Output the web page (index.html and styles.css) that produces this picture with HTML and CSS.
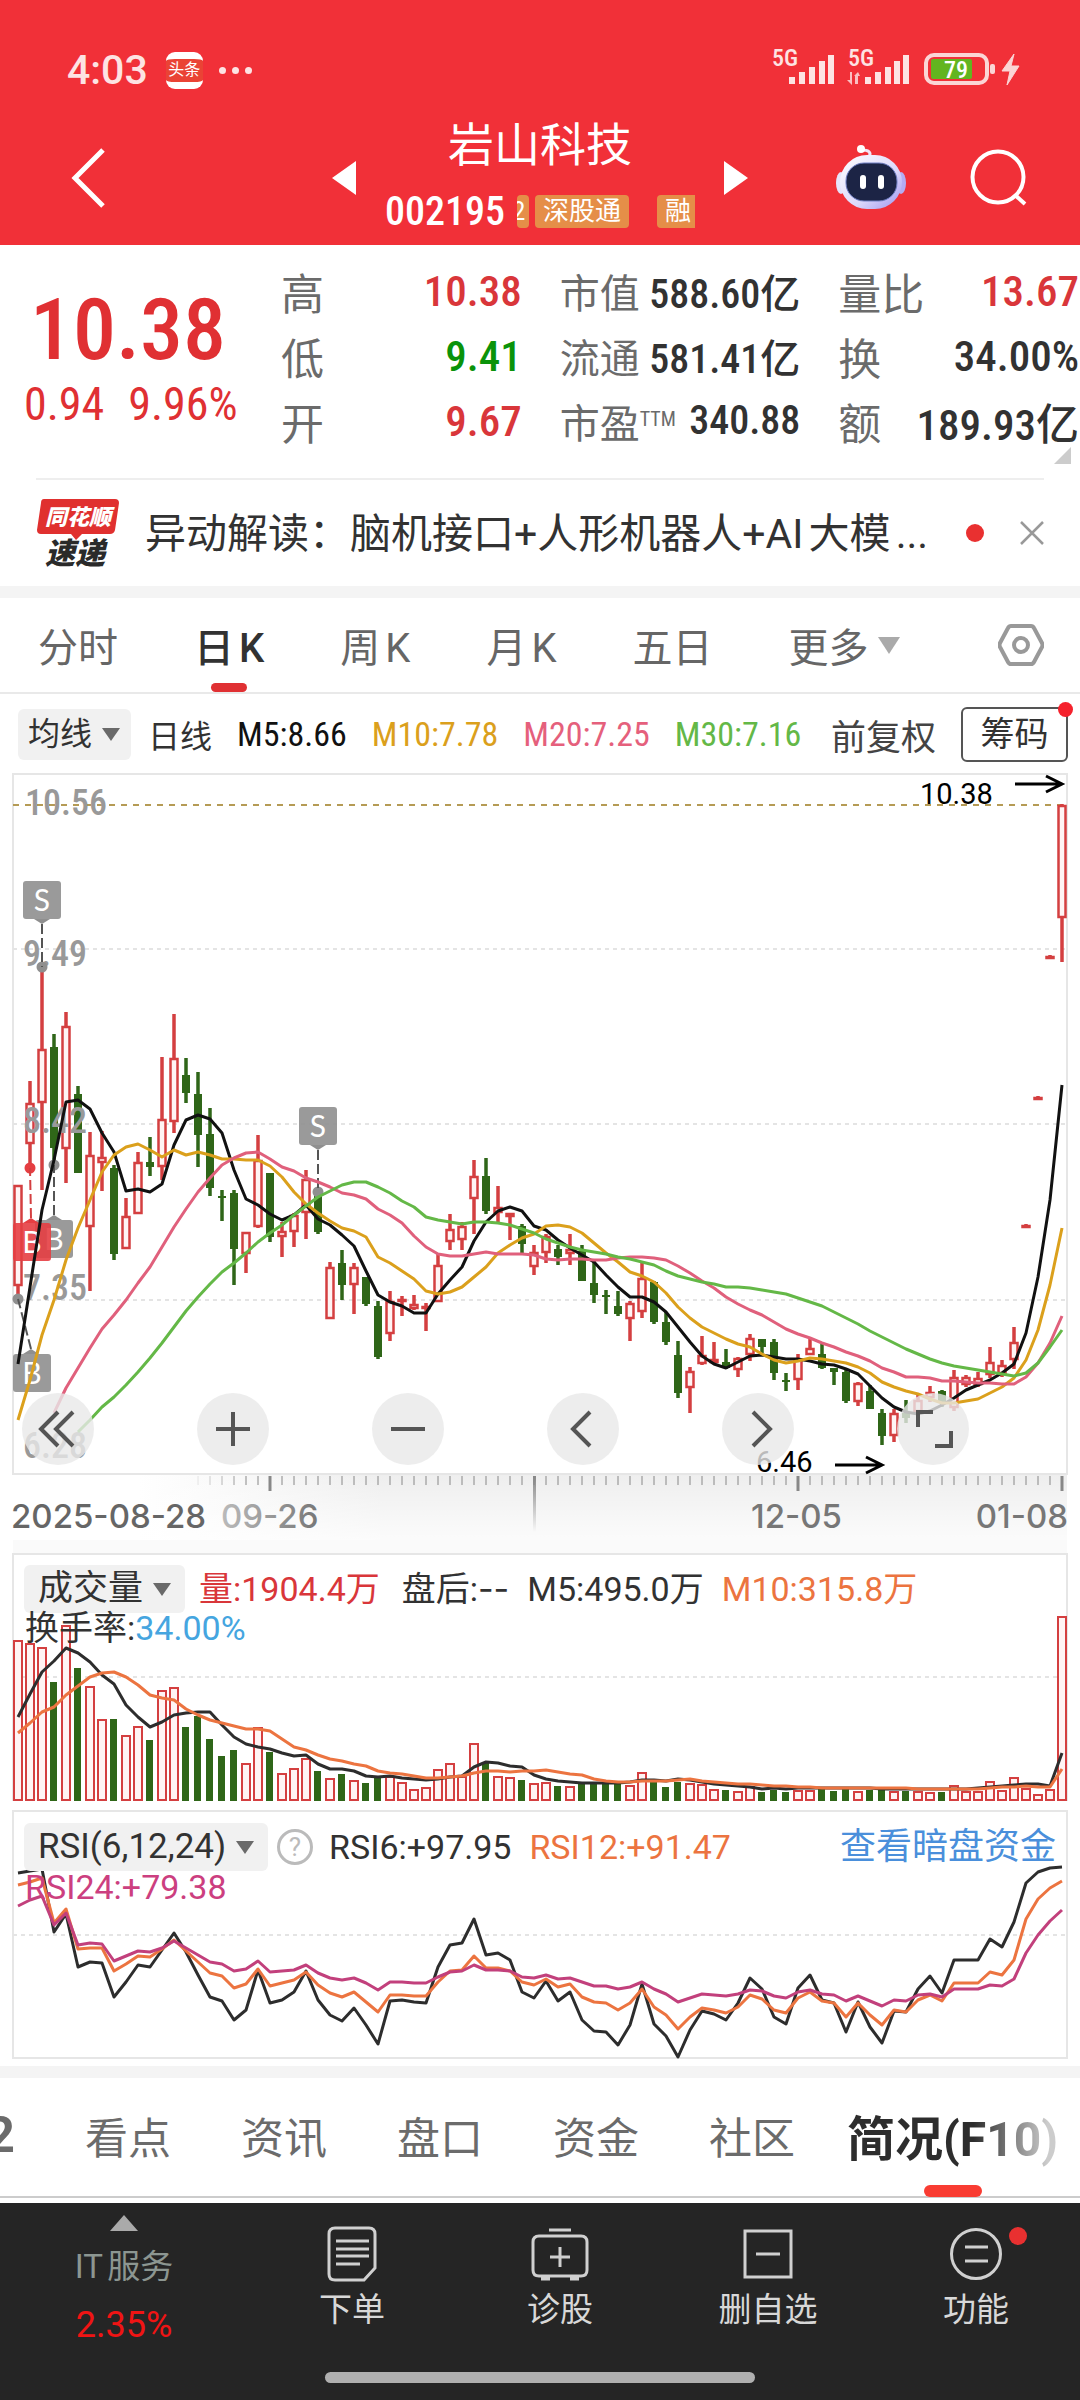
FILE: index.html
```html
<!DOCTYPE html>
<html lang="zh-CN">
<head>
    <meta charset="UTF-8">
    <meta name="viewport" content="width=device-width, initial-scale=1.0">
    <title>岩山科技 002195</title>
    <link rel="stylesheet" href="styles.css">
</head>
<body>
    <header class="top">
        <div class="status">
            <span class="clock">4:03</span>
            <span class="app-badge">头条</span>
            <span class="more-dots"><i></i><i></i><i></i></span>
            <svg class="status-icons" width="254" height="60" viewBox="768 40 254 60" aria-hidden="true">
                <g fill="#fde3e3">
                    <text x="772" y="66" class="net">5G</text>
                    <path d="M789 77h6v7h-6zM799 72h6v12h-6zM809 67h6v17h-6zM819 61h6v23h-6zM828 55h6v29h-6z"/>
                    <text x="848" y="66" class="net">5G</text>
                    <path d="M850 72v8h-3l5 5v-13zM855 84v-8h-1l4-4 2 4h-2v8z" opacity=".8"/>
                    <path d="M865 77h6v7h-6zM875 72h6v12h-6zM885 67h6v17h-6zM894 61h6v23h-6zM903 55h6v29h-6z"/>
                </g>
                <rect x="926" y="55" width="61" height="28" rx="8" fill="none" stroke="#fbd5d5" stroke-width="4"/>
                <rect x="931" y="59" width="41" height="20" rx="2" fill="#62b51f"/>
                <rect x="990" y="64" width="5" height="10" rx="2" fill="#fbd5d5"/>
                <text x="956" y="78" class="charge" text-anchor="middle">79</text>
                <path d="M1014 54l-12 17h8l-3 14 12-19h-8z" fill="#fbd5d5" stroke="#fbd5d5" stroke-width="1"/>
            </svg>
        </div>
        <div class="title-row">
            <button class="icon-btn back" aria-label="返回">
                <svg width="36" height="60" viewBox="0 0 36 60"><path d="M33 2L5 30l28 28" fill="none" stroke="#fff" stroke-width="5"/></svg>
            </button>
            <div class="stock">
                <button class="icon-btn" aria-label="上一只"><svg width="24" height="34"><path d="M24 0v34L0 17z" fill="#fff"/></svg></button>
                <div class="stock-name">
                    <h1>岩山科技</h1>
                    <div class="code-row">
                        <span class="code">002195</span>
                        <span class="tags"><b class="cut">2</b><b>深股通</b><b class="last">融</b></span>
                    </div>
                </div>
                <button class="icon-btn" aria-label="下一只"><svg width="24" height="34"><path d="M0 0v34l24-17z" fill="#fff"/></svg></button>
            </div>
            <div class="actions">
                <button class="icon-btn" aria-label="智能助手">
                    <svg width="70" height="66" viewBox="0 0 70 66">
                        <defs>
                            <linearGradient id="shell" x1="0" y1="0" x2="1" y2="1"><stop offset="0" stop-color="#fff"/><stop offset=".6" stop-color="#dcd8fb"/><stop offset="1" stop-color="#9c93ee"/></linearGradient>
                        </defs>
                        <path d="M33 12c3-5-1-7-7-7" fill="none" stroke="#f1e4f6" stroke-width="3"/>
                        <circle cx="25" cy="4" r="4" fill="#fff"/>
                        <ellipse cx="5" cy="38" rx="5" ry="11" fill="#e6e4fb"/>
                        <ellipse cx="65" cy="38" rx="5" ry="11" fill="#b4acf2"/>
                        <rect x="4" y="10" width="62" height="54" rx="27" fill="url(#shell)"/>
                        <rect x="10" y="18" width="51" height="38" rx="18" fill="#1c2445" stroke="#6f7fc4" stroke-width="1"/>
                        <rect x="24" y="30" width="6" height="14" rx="3" fill="#fff"/>
                        <rect x="42" y="30" width="6" height="14" rx="3" fill="#fff"/>
                    </svg>
                </button>
                <button class="icon-btn" aria-label="搜索">
                    <svg width="58" height="58" viewBox="0 0 58 58" fill="none" stroke="#fff" stroke-width="4"><circle cx="28" cy="28" r="25.5"/><path d="M45 46l10 9"/></svg>
                </button>
            </div>
        </div>
    </header>

    <main>
        <section class="quote">
            <div class="price">
                <strong>10.38</strong>
                <p><span>0.94</span><span>9.96%</span></p>
            </div>
            <dl>
                <div><dt>高</dt><dd class="up">10.38</dd></div>
                <div><dt>低</dt><dd class="down">9.41</dd></div>
                <div><dt>开</dt><dd class="up">9.67</dd></div>
            </dl>
            <dl class="compact">
                <div><dt>市值</dt><dd>588.60亿</dd></div>
                <div><dt>流通</dt><dd>581.41亿</dd></div>
                <div><dt>市盈<sup>TTM</sup></dt><dd>340.88</dd></div>
            </dl>
            <dl>
                <div><dt>量比</dt><dd class="up">13.67</dd></div>
                <div><dt>换</dt><dd>34.00%</dd></div>
                <div><dt>额</dt><dd>189.93亿</dd></div>
            </dl>
            <svg class="corner" width="17" height="17"><path d="M17 0v17H0z" fill="#ccc"/></svg>
        </section>

        <section class="news">
            <svg width="84" height="70" viewBox="0 0 84 70" role="img" aria-label="同花顺速递">
                <path d="M8 1h71q4 0 4 4l-4 27q-1 4-5 4H46l-6 6-5-6H5q-4 0-4-4L5 5q0-4 3-4z" fill="#e0302f"/>
                <text x="9" y="27" class="logo-top">同花顺</text>
                <text x="9" y="66" class="logo-bottom">速递</text>
            </svg>
            <a href="#">异动解读：脑机接口+人形机器人+AI大模...</a>
            <i class="dot"></i>
            <button class="icon-btn" aria-label="关闭"><svg width="24" height="24" viewBox="0 0 24 24"><path d="M1 1l22 22M23 1L1 23" stroke="#999" stroke-width="2.5"/></svg></button>
        </section>

        <nav class="periods">
            <button>分时</button>
            <button class="active">日K</button>
            <button>周K</button>
            <button>月K</button>
            <button>五日</button>
            <button class="menu">更多</button>
            <button class="settings" aria-label="设置"><svg width="46" height="44" viewBox="0 0 46 44" fill="none" stroke="#999" stroke-width="4"><path d="M13 3h20q2 0 3 2l8 15q1 2 0 4l-8 15q-1 2-3 2H13q-2 0-3-2L2 24q-1-2 0-4l8-15q1-2 3-2z"/><circle cx="23" cy="22" r="7"/></svg></button>
        </nav>

        <section class="averages">
            <span class="picker"><select aria-label="主图指标"><option>均线</option></select></span>
            <span>日线</span>
            <span class="ma ma5">M5:8.66</span>
            <span class="ma ma10">M10:7.78</span>
            <span class="ma ma20">M20:7.25</span>
            <span class="ma ma30">M30:7.16</span>
            <span class="adjust">前复权</span>
            <button class="chips">筹码</button>
        </section>

        <section class="panel">
            <svg viewBox="0 770 1080 770" role="img" aria-label="日K线">
                <defs>
                    <linearGradient id="fade"><stop offset=".12" stop-color="#eee" stop-opacity="0"/><stop offset=".35" stop-color="#eee"/></linearGradient>
                    <linearGradient id="rise" x1="0" y1="1" x2="0" y2="0"><stop offset="0" stop-color="#fff" stop-opacity=".8"/><stop offset="1" stop-color="#fff" stop-opacity="0"/></linearGradient>
                    <linearGradient id="mark" x1="0" y1="0" x2="0" y2="1"><stop offset="0" stop-color="#888"/><stop offset="1" stop-color="#888" stop-opacity="0"/></linearGradient>
                    <linearGradient id="dateFade"><stop offset="0" stop-color="#bbb"/><stop offset="1" stop-color="#777"/></linearGradient>
                </defs>
                <rect x="13" y="1474" width="1054" height="66" fill="url(#fade)"/>
                <rect x="13" y="1474" width="1054" height="66" fill="url(#rise)"/>
                <rect x="13" y="774" width="1054" height="700" fill="none" stroke="#e6e6e6" stroke-width="2"/>
                <path class="grid" d="M13 949H1066M13 1124H1066M13 1300H1066"/>
                <path d="M13 805H1066" stroke="#b59b55" stroke-width="2" stroke-dasharray="6 6"/>
                <g id="candles"></g>
                <g class="scale">
                    <text x="25" y="815">10.56</text><text x="23" y="966">9.49</text><text x="23" y="1133">8.42</text><text x="23" y="1300">7.35</text><text x="23" y="1458">6.28</text>
                </g>
                <g id="signals"></g>
                <g id="averages"></g>
                <g class="peak">
                    <text x="920" y="804">10.38</text><path d="M1015 784h46M1046 776l16 8-16 8"/>
                    <text x="756" y="1472">6.46</text><path d="M835 1465h46M866 1457l16 8-16 8"/>
                </g>
                <g id="ticks"></g>
                <rect x="533" y="1476" width="3" height="56" fill="url(#mark)"/>
                <g class="dates">
                    <text x="11" y="1528" fill="#666">2025-08-28</text>
                    <text x="221" y="1528" fill="url(#dateFade)">09-26</text>
                    <text x="751" y="1528" fill="#777">12-05</text>
                    <text x="1068" y="1528" fill="#777" text-anchor="end">01-08</text>
                </g>
            </svg>
            <div class="tools">
                <button aria-label="最早"><svg viewBox="0 0 72 72"><path d="M36 19L19 36l17 17M51 19L34 36l17 17"/></svg></button>
                <button aria-label="放大"><svg viewBox="0 0 72 72"><path d="M36 19v34M19 36h34"/></svg></button>
                <button aria-label="缩小"><svg viewBox="0 0 72 72"><path d="M19 36h34"/></svg></button>
                <button aria-label="左移"><svg viewBox="0 0 72 72"><path d="M43 19L26 36l17 17"/></svg></button>
                <button aria-label="右移"><svg viewBox="0 0 72 72"><path d="M31 19l17 17-17 17"/></svg></button>
                <button aria-label="全屏"><svg viewBox="0 0 72 72"><path d="M21 34V19h15M54 38v15H38"/></svg></button>
            </div>
        </section>

        <section class="panel">
            <svg viewBox="0 1540 1080 265" role="img" aria-label="成交量">
                <rect width="1054" height="14" x="13" y="1540" fill="#fafafa"/>
                <path d="M13 1801V1554H1067V1801" fill="none" stroke="#e6e6e6" stroke-width="2"/>
                <path class="grid" d="M13 1677H1066"/>
                <g id="volume"></g>
            </svg>
            <div class="legend">
                <span class="picker"><select aria-label="副图指标一"><option>成交量</option></select></span>
                <span class="up">量:1904.4万</span>
                <span>盘后:<span class="dashes">--</span></span>
                <span>M5:495.0万</span>
                <span class="orange">M10:315.8万</span>
            </div>
            <p class="legend-extra">换手率:<span class="turnover">34.00%</span></p>
        </section>

        <section class="panel">
            <svg viewBox="0 1805 1080 261" role="img" aria-label="RSI">
                <rect x="13" y="1811" width="1054" height="247" fill="none" stroke="#e6e6e6" stroke-width="2"/>
                <path class="grid" d="M13 1935H1066"/>
                <g id="rsi"></g>
            </svg>
            <div class="legend rsi-legend">
                <span class="picker"><select aria-label="副图指标二"><option>RSI(6,12,24)</option></select></span>
                <button class="help" aria-label="说明">?</button>
                <span class="rsi6">RSI6:+97.95</span>
                <span class="orange">RSI12:+91.47</span>
                <a href="#">查看暗盘资金</a>
            </div>
            <p class="legend-extra rsi-extra">RSI24:+79.38</p>
        </section>

        <nav class="sections">
            <a href="#" class="cut-tab">2</a>
            <a href="#">看点</a>
            <a href="#">资讯</a>
            <a href="#">盘口</a>
            <a href="#">资金</a>
            <a href="#">社区</a>
            <a href="#" class="active"><span>简况(F10)</span></a>
        </nav>
    </main>

    <footer class="bottom">
        <div class="bottom-row">
            <a href="#" class="sector">
                <svg width="28" height="16"><path d="M14 0l14 16H0z" fill="#aaa"/></svg>
                <span>IT服务</span>
                <b>2.35%</b>
            </a>
            <a href="#">
                <svg width="60" height="56" viewBox="0 0 60 56"><path d="M13 2h34q6 0 6 6v34L42 54H13q-6 0-6-6V8q0-6 6-6zM14 15h33M14 23h33M14 30h33M14 38h24"/></svg>
                <span>下单</span>
            </a>
            <a href="#">
                <svg width="60" height="56" viewBox="0 0 60 56"><path d="M19 4h22M9 10h42q6 0 6 6v28q0 6-6 6H9q-6 0-6-6V16q0-6 6-6zM30 21v20M20 31h20M11 53h9M40 53h9"/></svg>
                <span>诊股</span>
            </a>
            <a href="#">
                <svg width="60" height="56" viewBox="0 0 60 56"><path d="M7 5h46v46H7zM18 28h24"/></svg>
                <span>删自选</span>
            </a>
            <a href="#">
                <svg width="60" height="56" viewBox="0 0 60 56"><circle cx="30" cy="28" r="24.5"/><path d="M19 21h23M19 35h23"/></svg>
                <span>功能</span>
                <i class="dot badge"></i>
            </a>
        </div>
        <div class="home-bar"></div>
    </footer>

    <script src="chart.js"></script>
</body>
</html>
```
FILE: styles.css
```css
* {
    box-sizing: border-box;
}

body {
    margin: 0;
    background: #fff;
    color: #323232;
    font-family: "Roboto Condensed", Roboto, "Noto Sans CJK SC", sans-serif;
    font-size: 35px;
    text-autospace: no-autospace;
}

button, select {
    font: inherit;
    color: inherit;
    background: none;
    border: none;
    padding: 0;
    margin: 0;
}

a {
    color: inherit;
    text-decoration: none;
}

h1, p, dl, dd {
    margin: 0;
}

svg {
    display: block;
}

.up {
    color: #d9363a;
}

.down {
    color: #0a930a;
}

.dot {
    width: 18px;
    height: 18px;
    border-radius: 50%;
    background: #e93030;
}

/* header */

.top {
    background: #f13038;
    color: #fff;
    padding-bottom: 1px;
}

.status {
    display: flex;
    align-items: center;
    height: 112px;
    padding: 28px 58px 0 67px;
}

.clock {
    font-family: Roboto, sans-serif;
    font-size: 41px;
    font-weight: 500;
    color: #fde3e3;
}

.app-badge {
    width: 37px;
    height: 37px;
    margin: 0 16px 0 18px;
    border-radius: 9px;
    border: solid #fff;
    border-width: 7px 0;
    background: #ea4335;
    font-size: 16px;
    line-height: 22px;
    text-align: center;
}

.more-dots {
    display: flex;
    gap: 6px;
    margin-right: auto;
}

.more-dots i {
    width: 7px;
    height: 7px;
    border-radius: 50%;
    background: #fde3e3;
}

.net {
    font: 500 24px "Roboto Condensed", sans-serif;
}

.charge {
    font: 500 24px "Roboto Condensed", sans-serif;
    fill: #fff;
}

.title-row {
    display: grid;
    grid-template-columns: 1fr 416px 1fr;
    align-items: center;
}

.back {
    justify-self: start;
    margin-left: 70px;
}

.stock {
    display: flex;
    align-items: center;
    justify-content: space-between;
}

.stock-name {
    text-align: center;
}

h1 {
    font-size: 46px;
    font-weight: 400;
    line-height: 66px;
}

.code-row {
    display: flex;
    align-items: center;
    gap: 12px;
    height: 66px;
}

.code {
    font-size: 40px;
    font-weight: 500;
}

.tags {
    display: flex;
    width: 178px;
    overflow: hidden;
}

.tags b {
    flex: none;
    margin-right: 6px;
    padding: 0 8px;
    border-radius: 4px;
    background: #e58e48;
    font-size: 26px;
    font-weight: 400;
    line-height: 33px;
}

.tags .cut {
    width: 12px;
    padding: 0;
    text-indent: -8px;
}

.tags .last {
    margin: 0 0 0 22px;
}

.actions {
    display: flex;
    align-items: center;
    justify-content: flex-end;
    gap: 64px;
    padding-right: 52px;
}

/* quote */

.quote {
    position: relative;
    display: grid;
    grid-template-columns: 243px 1fr 1fr 1fr;
    gap: 38px;
    padding: 13px 1px 25px 0;
}

.price {
    padding: 28px 0 0 24px;
    color: #e03033;
}

.price strong {
    display: block;
    padding-left: 6px;
    font-size: 86px;
    font-weight: 500;
    line-height: 88px;
}

.price p {
    display: flex;
    gap: 24px;
    font-size: 46px;
    line-height: 60px;
}

.quote dl div {
    display: flex;
    align-items: center;
    justify-content: space-between;
    height: 65px;
    font-size: 43px;
    white-space: nowrap;
}

.quote dl.compact div {
    font-size: 40px;
}

dt {
    color: #6b6b6b;
}

dd {
    font-weight: 500;
}

sup {
    font-size: 20px;
    line-height: 0;
    vertical-align: 12px;
}

.corner {
    position: absolute;
    right: 9px;
    bottom: 14px;
}

/* news */

.news {
    display: flex;
    align-items: center;
    height: 108px;
    margin: 0 36px;
    border-top: 2px solid #eee;
}

.news a {
    flex: 1;
    margin-left: 25px;
    padding-bottom: 6px;
    font-family: Roboto, "Noto Sans CJK SC", sans-serif;
    font-size: 41px;
    white-space: nowrap;
    text-autospace: normal;
}

.news .dot {
    margin-right: 36px;
}

.logo-top, .logo-bottom {
    font-family: "Noto Sans CJK SC", sans-serif;
    font-weight: 900;
    font-style: italic;
}

.logo-top {
    font-size: 22px;
    fill: #fff;
}

.logo-bottom {
    font-size: 30px;
    fill: #2a2a2a;
}

/* period tabs */

.periods {
    display: flex;
    gap: 76px;
    height: 108px;
    padding: 0 36px 0 38px;
    border-top: 12px solid #f4f4f4;
    border-bottom: 2px solid #e9e9e9;
    font-family: Roboto, "Noto Sans CJK SC", sans-serif;
    font-size: 40px;
    color: #666;
    text-autospace: normal;
}

.periods .active {
    position: relative;
    font-weight: 500;
    color: #323232;
}

.periods .active::after {
    content: "";
    position: absolute;
    left: 50%;
    bottom: 0;
    width: 36px;
    height: 9px;
    margin-left: -18px;
    border-radius: 5px;
    background: #e03033;
}

.menu {
    display: flex;
    align-items: center;
    gap: 9px;
}

.menu::after {
    content: "";
    border: 11px solid transparent;
    border-top: 17px solid #aaa;
    border-bottom: 0;
}

.settings {
    margin-left: auto;
}

/* moving averages */

.averages {
    display: flex;
    align-items: center;
    gap: 25px;
    height: 76px;
    padding: 4px 12px 0 18px;
    font-size: 32px;
    white-space: nowrap;
}

.averages .picker {
    margin-right: -8px;
}

.picker {
    display: flex;
    align-items: center;
    gap: 9px;
    height: 51px;
    padding: 0 11px 0 10px;
    border-radius: 6px;
    background: #f1f1f1;
}

.picker select {
    appearance: none;
}

.picker::after {
    content: "";
    border: 9px solid transparent;
    border-top: 13px solid #6a6a6a;
    border-bottom: 0;
}

.ma {
    font-size: 34px;
}

.ma5 {
    color: #111;
}

.ma10 {
    color: #dba01c;
}

.ma20 {
    color: #e5607c;
}

.ma30 {
    color: #64b847;
}

.adjust {
    margin-left: auto;
    font-size: 35px;
    color: #444;
}

.chips {
    position: relative;
    width: 107px;
    height: 55px;
    border: 2px solid #555;
    border-radius: 6px;
    font-size: 34px;
    line-height: 50px;
}

.chips::after {
    content: "";
    position: absolute;
    top: -7px;
    right: -7px;
    width: 15px;
    height: 15px;
    border-radius: 50%;
    background: #f5222d;
}

/* chart panels */

.panel {
    position: relative;
}

.panel > svg {
    width: 100%;
}

.grid {
    fill: none;
    stroke: #e4e4e4;
    stroke-width: 2;
    stroke-dasharray: 4 4;
}

.scale text {
    font: 500 36px "Roboto Condensed", sans-serif;
    fill: #999;
}

.dates text {
    font: 500 33px Inter, sans-serif;
}

.peak text {
    font: 29px Roboto, sans-serif;
    fill: #000;
}

.peak path {
    fill: none;
    stroke: #000;
    stroke-width: 3;
}

.line {
    fill: none;
    stroke-width: 3;
    stroke-linejoin: round;
}

.sign text {
    font: 30px Lato, sans-serif;
    fill: #fff;
    text-anchor: middle;
}

.tools {
    position: absolute;
    left: 2%;
    right: 10.3%;
    bottom: 75px;
    display: flex;
    justify-content: space-between;
}

.tools button {
    width: 72px;
    height: 72px;
    border-radius: 50%;
    background: rgba(232, 232, 232, 0.8);
}

.tools path {
    fill: none;
    stroke: #555;
    stroke-width: 4;
}

.legend {
    position: absolute;
    top: 25px;
    left: 24px;
    right: 24px;
    display: flex;
    align-items: center;
    font-family: Roboto, "Noto Sans CJK SC", sans-serif;
    font-size: 34px;
    line-height: 48px;
    white-space: nowrap;
}

.legend > span {
    margin-right: 18px;
}

.legend > .picker {
    height: 48px;
    margin-right: 14px;
    padding: 0 14px;
    font-size: 35px;
}

.legend > .up {
    margin-right: 22px;
}

.dashes {
    font-family: Inter, sans-serif;
}

.orange {
    color: #ec7440;
}

.legend a {
    margin-left: auto;
    font-size: 36px;
    color: #4a8fdb;
}

.rsi-legend {
    top: 18px;
}

.rsi-legend > .picker {
    margin-right: 9px;
}

.help {
    width: 36px;
    height: 36px;
    margin-right: 16px;
    border: 3px solid #bbb;
    border-radius: 50%;
    font-size: 26px;
    line-height: 30px;
    color: #bbb;
}

.legend-extra {
    position: absolute;
    top: 68px;
    left: 25px;
    font-family: Roboto, "Noto Sans CJK SC", sans-serif;
    font-size: 34px;
    line-height: 40px;
}

.turnover {
    color: #45a5e0;
}

.rsi-extra {
    top: 62px;
    color: #cc3f80;
}

/* section tabs */

.sections {
    display: flex;
    align-items: flex-start;
    gap: 70px;
    height: 137px;
    border-top: 12px solid #f4f4f4;
    font-family: Roboto, "Noto Sans CJK SC", sans-serif;
    font-size: 43px;
    color: #6b6b6b;
    white-space: nowrap;
    overflow: hidden;
    box-shadow: inset 0 -5px #fff, inset 0 -7px #ccc;
}

.sections a {
    display: flex;
    align-items: center;
    height: 119px;
    padding-bottom: 6px;
}

.cut-tab {
    width: 15px;
    justify-content: flex-end;
    font-weight: 700;
    font-size: 50px;
}

.sections .active {
    position: relative;
    margin-left: -18px;
    font-size: 48px;
    font-weight: 700;
    color: #2d2d2d;
}

.sections .active span {
    background: linear-gradient(90deg, #2d2d2d 60%, #ccc 95%);
    background-clip: text;
    color: transparent;
}

.sections .active::after {
    content: "";
    position: absolute;
    left: 50%;
    bottom: 0;
    width: 58px;
    height: 12px;
    margin-left: -29px;
    border-radius: 6px;
    background: #f93c32;
}

/* bottom bar */

.bottom {
    background: #252525;
    color: #d8d8d8;
    padding: 12px 0 17px;
}

.bottom-row {
    display: grid;
    grid-template-columns: 248fr 208fr 208fr 208fr 208fr;
    height: 157px;
}

.bottom-row a {
    position: relative;
    display: flex;
    flex-direction: column;
    align-items: center;
    padding-top: 11px;
    font-size: 33px;
    line-height: 56px;
}

.bottom-row a:not(.sector) path, .bottom-row circle {
    fill: none;
    stroke: #d0d0d0;
    stroke-width: 3;
}

.bottom-row .sector {
    padding-top: 0;
    font-family: Roboto, "Noto Sans CJK SC", sans-serif;
    line-height: 59px;
    color: #8c9691;
    text-autospace: normal;
}

.sector span {
    margin-top: 6px;
}

.sector b {
    font-size: 36px;
    font-weight: 400;
    color: #f01414;
}

.badge {
    position: absolute;
    top: 12px;
    right: 53px;
}

.home-bar {
    width: 430px;
    height: 11px;
    margin: 0 auto;
    border-radius: 6px;
    background: #b0b0b0;
}
```
FILE: chart.js
```javascript
const RED = '#d43f40';
const GREEN = '#2f6618';
const STEP = 12;
const LEFT = 18;

// high, body top, body bottom, low, falling
const candles = [
    [1185,1185,1286,1299,0],[1081,1103,1144,1168,0],[967,1049,1103,1190,0],[1034,1047,1148,1165,1],[1012,1026,1149,1183,0],
    [1086,1094,1173,1173,1],[1132,1155,1227,1291,0],[1131,1157,1163,1191,0],[1165,1168,1254,1260,1],[1198,1216,1249,1249,0],
    [1152,1162,1214,1214,0],[1137,1162,1167,1176,1],[1057,1119,1167,1180,0],[1014,1058,1122,1133,0],[1058,1075,1093,1103,1],
    [1072,1094,1135,1167,1],[1108,1134,1188,1196,1],[1190,1196,1198,1221,1],[1190,1193,1249,1285,1],[1232,1232,1254,1273,0],
    [1135,1160,1227,1228,0],[1173,1173,1237,1242,1],[1222,1231,1237,1257,0],[1213,1215,1232,1247,0],[1170,1179,1213,1239,0],
    [1190,1193,1232,1234,1],[1262,1267,1319,1319,0],[1250,1263,1285,1300,1],[1263,1267,1285,1314,0],[1277,1277,1304,1306,1],
    [1301,1306,1357,1359,1],[1291,1301,1334,1341,0],[1296,1299,1301,1316,0],[1295,1304,1309,1310,0],[1303,1306,1308,1331,0],
    [1253,1265,1302,1302,0],[1214,1229,1242,1250,0],[1222,1226,1240,1250,0],[1160,1176,1199,1234,0],[1158,1176,1211,1214,1],
    [1186,1207,1213,1222,0],[1213,1213,1217,1240,0],[1224,1226,1244,1253,1],[1245,1252,1267,1275,0],[1234,1236,1253,1263,0],
    [1245,1249,1257,1265,1],[1234,1249,1254,1265,0],[1245,1251,1281,1281,1],[1260,1283,1295,1303,1],[1290,1295,1297,1314,1],
    [1291,1306,1314,1316,1],[1301,1303,1319,1341,0],[1263,1278,1312,1318,0],[1281,1282,1322,1324,1],[1312,1322,1342,1345,1],
    [1341,1355,1393,1398,1],[1367,1371,1388,1413,0],[1336,1355,1364,1365,0],[1342,1359,1363,1364,0],[1349,1362,1368,1369,1],
    [1357,1358,1370,1377,0],[1334,1338,1355,1361,0],[1339,1339,1347,1353,1],[1339,1342,1373,1380,1],[1373,1380,1382,1391,1],
    [1354,1359,1380,1390,0],[1337,1348,1355,1355,0],[1343,1354,1368,1369,1],[1368,1368,1372,1385,1],[1369,1372,1401,1403,1],
    [1382,1383,1402,1406,0],[1385,1391,1409,1409,1],[1409,1413,1436,1445,1],[1409,1413,1436,1442,0],[1400,1413,1418,1423,1],
    [1395,1400,1412,1412,0],[1386,1392,1398,1402,0],[1390,1391,1403,1407,1],[1370,1377,1408,1411,0],[1375,1377,1385,1387,0],
    [1372,1378,1385,1387,0],[1347,1362,1375,1378,0],[1360,1365,1374,1377,0],[1327,1342,1360,1369,0],[1224,1225,1227,1227,0],
    [1096,1097,1099,1099,0],[955,956,958,958,0],[804,805,918,962,0]
];

const ma5 = [1364,1287,1210,1160,1102,1100,1109,1133,1152,1191,1189,1192,1184,1145,1120,1115,1119,1133,1170,1199,1205,1214,1220,1215,1205,1219,1225,1235,1246,1271,1295,1302,1306,1313,1313,1294,1280,1267,1241,1222,1211,1207,1211,1226,1230,1240,1248,1255,1262,1275,1287,1297,1297,1302,1312,1327,1342,1356,1364,1368,1362,1356,1355,1357,1359,1359,1361,1364,1365,1369,1374,1386,1398,1407,1412,1414,1411,1405,1398,1390,1385,1380,1373,1364,1333,1277,1200,1085];
const ma10 = [1420,1380,1335,1300,1260,1228,1200,1172,1155,1147,1144,1150,1157,1150,1155,1152,1155,1159,1159,1160,1160,1166,1177,1192,1204,1213,1221,1228,1231,1237,1257,1263,1271,1279,1291,1294,1292,1287,1277,1267,1253,1245,1238,1234,1226,1225,1227,1233,1243,1253,1262,1272,1276,1282,1293,1307,1318,1327,1333,1339,1344,1347,1354,1360,1363,1361,1358,1359,1361,1363,1367,1373,1382,1387,1391,1394,1399,1403,1403,1401,1399,1393,1387,1378,1360,1330,1285,1228];
const ma20 = [1413,1388,1368,1348,1329,1315,1300,1283,1267,1247,1227,1209,1192,1178,1165,1158,1153,1152,1159,1167,1171,1178,1182,1187,1193,1195,1199,1209,1215,1223,1236,1247,1254,1256,1256,1254,1252,1254,1254,1254,1255,1259,1260,1259,1259,1260,1260,1258,1257,1257,1258,1260,1266,1273,1281,1288,1297,1304,1310,1315,1322,1329,1334,1338,1343,1347,1352,1356,1361,1368,1372,1377,1377,1378,1381,1381,1382,1383,1383,1384,1384,1377,1363,1343,1316];
const ma30 = [1432,1420,1407,1397,1385,1372,1358,1343,1327,1311,1297,1284,1272,1263,1253,1242,1233,1225,1215,1206,1197,1191,1185,1182,1182,1187,1193,1201,1207,1217,1220,1222,1224,1222,1222,1223,1225,1229,1233,1239,1243,1247,1250,1252,1254,1257,1259,1262,1265,1271,1276,1279,1282,1284,1287,1287,1288,1290,1292,1294,1298,1302,1306,1312,1318,1324,1331,1337,1343,1349,1354,1359,1363,1366,1368,1370,1372,1374,1376,1373,1363,1347,1330];

// distances below the top of each sub chart, three units to a pixel
const vol = [300,308,322,427,255,385,438,537,538,585,558,600,450,440,562,528,598,648,630,668,560,637,698,683,655,694,713,703,720,729,710,707,725,747,741,686,668,708,608,665,708,710,721,728,726,738,737,727,727,727,730,735,695,726,741,726,730,732,747,750,753,738,756,750,756,750,750,748,752,748,752,750,750,752,752,753,755,756,735,754,752,722,750,711,745,762,747,228];
const vol5 = [532,462,395,362,325,338,365,405,432,495,530,560,545,525,520,516,516,555,590,612,621,628,640,648,645,671,686,687,692,707,710,708,713,718,721,718,712,707,682,665,669,678,682,706,716,723,726,729,729,729,728,727,720,721,722,718,720,726,731,735,738,741,746,744,747,745,744,745,745,745,745,745,746,746,746,746,747,748,746,746,745,741,738,735,732,732,737,638];
const vol10 = [580,548,515,500,465,437,410,400,396,412,435,464,475,480,508,525,540,548,558,567,566,573,597,620,631,645,656,663,671,679,692,699,702,708,714,714,711,709,700,693,693,695,693,692,690,695,701,706,716,723,726,727,724,722,723,719,718,722,727,729,731,731,736,738,739,742,742,744,744,744,744,744,744,744,745,746,747,747,747,747,747,745,742,740,739,740,741,688];

const rsi6 = [220,214,208,395,342,500,486,489,590,546,495,500,450,400,455,525,591,602,661,630,510,610,600,575,512,600,645,662,625,675,732,603,600,607,610,500,436,429,357,464,460,480,575,593,543,602,576,659,692,695,735,675,552,672,708,770,690,632,642,661,610,535,566,652,672,563,525,600,610,697,605,680,729,632,637,566,529,580,480,480,480,418,440,365,248,215,204,201];
const rsi12 = [254,245,235,370,328,448,443,443,512,493,467,470,448,420,452,485,520,528,563,552,506,557,550,540,515,555,580,591,577,605,635,584,584,587,587,545,514,510,468,505,504,512,547,554,538,560,552,590,606,609,629,610,568,622,645,686,652,625,630,638,620,585,596,630,638,595,577,602,608,650,610,645,675,630,635,600,584,602,549,549,549,516,525,480,357,297,265,243];
const rsi24 = [317,301,288,375,340,435,430,433,482,468,454,456,443,422,443,464,486,492,512,506,484,515,512,509,496,518,534,540,534,549,570,546,546,548,548,532,515,512,496,511,509,512,530,533,525,537,534,547,558,558,567,560,546,568,582,605,595,582,585,588,582,569,573,587,594,575,570,581,585,602,588,602,617,600,603,586,582,590,568,568,568,555,558,537,458,405,363,331];

const x = i => LEFT + i * STEP;

function add(id, markup) {
    document.getElementById(id).insertAdjacentHTML('beforeend', markup);
}

// series end at the newest day, so shorter ones start further right
function drawLine(id, values, color) {
    const first = candles.length - values.length;
    const points = values.map((v, i) => `${x(first + i)},${v}`).join(' ');
    add(id, `<polyline class="line" points="${points}" stroke="${color}"/>`);
}

function drawScaled(id, values, top, color) {
    drawLine(id, values.map(v => Math.round(top + v / 3)), color);
}

function drawCandles() {
    candles.forEach(([high, top, bottom, low, falling], i) => {
        const color = falling ? GREEN : RED;
        const cx = x(i);
        add('candles', `<path d="M${cx} ${high}V${top}M${cx} ${bottom}V${low}" stroke="${color}" stroke-width="3.5"/>`);
        if (falling) {
            add('candles', `<rect x="${cx - 4}" y="${top}" width="8" height="${bottom - top}" fill="${color}"/>`);
        } else {
            add('candles', `<rect x="${cx - 3.5}" y="${top + 1}" width="7" height="${Math.max(bottom - top - 2, 1)}" fill="#fff4f4" stroke="${color}" stroke-width="2.5"/>`);
        }
    });
}

function drawVolume() {
    vol.forEach((v, i) => {
        const y = Math.round(1540 + v / 3);
        if (candles[i][4]) {
            add('volume', `<rect x="${x(i) - 4}" y="${y}" width="7" height="${1801 - y}" fill="${GREEN}"/>`);
        } else {
            add('volume', `<rect x="${x(i) - 4}" y="${y + 1}" width="8" height="${1799 - y}" fill="#fff4f4" stroke="${RED}" stroke-width="2"/>`);
        }
    });
}

// buy / sell flags: box corner, tip side and the candle point they refer to
function drawSignal(letter, left, top, px, py, color) {
    const down = py > top;
    const tipX = Math.min(Math.max(px, left + 18), left + 20);
    const edge = down ? top + 38 : top;
    const tipY = down ? edge + 5 : edge - 5;
    add('signals', `<g class="sign">
        <circle cx="${px}" cy="${py}" r="5.5" fill="${color}"/>
        <path d="M${tipX} ${tipY}L${px} ${py}" stroke="${color === '#8f8f8f' ? '#555' : RED}" stroke-width="2" stroke-dasharray="10 4"/>
        <rect x="${left}" y="${top}" width="38" height="38" rx="3" fill="${color}" opacity=".9"/>
        <path d="M${tipX - 8} ${edge}L${tipX} ${tipY}L${tipX + 8} ${edge}z" fill="${color}"/>
        <text x="${left + 19}" y="${top + 30}">${letter}</text>
    </g>`);
}

function drawTicks() {
    for (let i = 15; i < candles.length; i++) {
        const major = i === 21 || i === 65 || i === 87;
        const opacity = Math.min(1, (i - 14) / 5);
        add('ticks', `<path d="M${x(i)} 1476v${major ? 15 : 9}" stroke="#888" stroke-width="${major ? 3 : 1}" opacity="${opacity}"/>`);
    }
}

drawCandles();
drawSignal('S', 23, 881, 42, 967, '#8f8f8f');
drawSignal('S', 299, 1107, 318, 1192, '#8f8f8f');
drawSignal('B', 35, 1220, 54, 1165, '#8f8f8f');
drawSignal('B', 13, 1223, 30, 1168, '#e53e42');
drawSignal('B', 13, 1354, 18, 1299, '#8f8f8f');
drawLine('averages', ma5, '#111');
drawLine('averages', ma10, '#dba01c');
drawLine('averages', ma20, '#e0607c');
drawLine('averages', ma30, '#64b847');
drawTicks();

drawVolume();
drawScaled('volume', vol5, 1540, '#2d2d2d');
drawScaled('volume', vol10, 1540, '#ec7440');

drawScaled('rsi', rsi6, 1800, '#2d2d2d');
drawScaled('rsi', rsi12, 1800, '#ec7440');
drawScaled('rsi', rsi24, 1800, '#c2407c');
```
